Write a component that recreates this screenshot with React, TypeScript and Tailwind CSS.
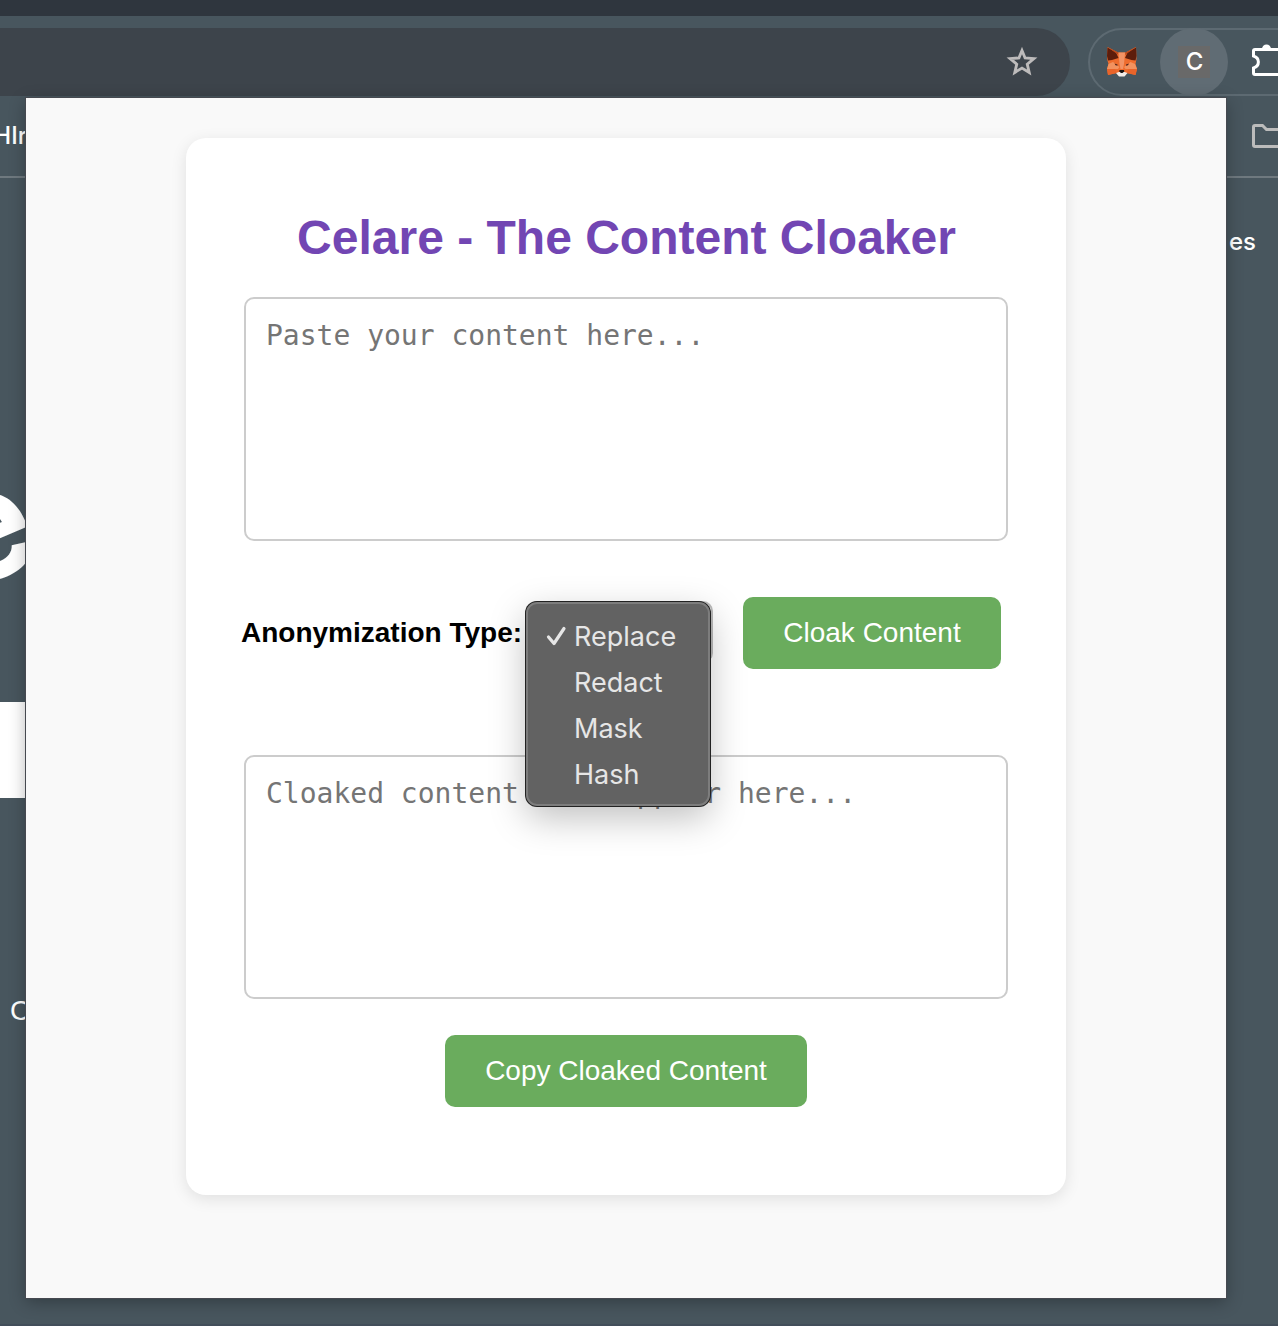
const options = ["Replace", "Redact", "Mask", "Hash"];

function Fox() {
  return (
    <svg width="32" height="30" viewBox="0 0 32 30" className="shrink-0">
      <path d="M1.500 0 12 5.500H19.500L30 0 30.500 12 29.500 17 31 22 29.500 28 21 26 18 29H13.500L10.500 26 2 28 1 22 2.500 17 1 12Z" fill="#ee6c2d" />
      <path d="M1.500 0.500 10 5.500 12.500 11 6 13 2 13.500 1 9Z M30 0.500 21.500 5.500 19 11 25.500 13 29.500 13.500 30.500 9Z" fill="#5d1d0b" />
      <path d="M1.500 0 12 5.500 12.500 8Z M30 0 19.500 5.500 19 8Z" fill="#b9481b" />
      <path d="M12.500 5.500H19L18 17 17 22H14.500L13.500 17Z" fill="#f29365" />
      <path d="M2.500 17 7 15 13.500 20 12 22 1 22Z M29 17 24.500 15 18 20 19.500 22 31 22Z" fill="#f2925f" />
      <path d="M1 22H9L11 26 2 28Z M31 22H22.500L20.500 26 29.500 28Z" fill="#e9642a" />
      <path d="M8.500 16.500 11.500 17.500 11.500 18.800 9.500 18.200Z M23 16.500 20 17.500 20 18.800 22 18.200Z" fill="#522318" />
      <path d="M10 26 13 25H18.500L21.500 26 18.500 29.500H13Z" fill="#f3ede9" />
      <path d="M13.500 23H18L18.300 24.500 16.500 26H15L13.200 24.500Z" fill="#1b1210" />
    </svg>
  );
}

function BrowserToolbar() {
  return (
    <div className="flex h-20 items-start bg-[#48565e] pt-3">
      <div className="flex h-[68px] w-[1070px] shrink-0 items-center justify-end rounded-r-full bg-[#3d444b] pr-[30px]">
        <svg width="36" height="36" viewBox="0 0 24 24" fill="none" stroke="#bdbbbb" strokeWidth="1.900">
          <path d="M12 4.300 14.050 9.300 19.900 9.800 15.500 13.450 16.800 18.950 12 16.050 7.200 18.950 8.500 13.450 4.100 9.800 9.950 9.300Z" />
        </svg>
      </div>
      <div className="ml-[18px] flex h-[68px] w-[240px] shrink-0 items-center rounded-l-full border-2 border-[#5d6a72] pl-4">
        <Fox />
        <div className="ml-[22px] flex size-[68px] shrink-0 items-center justify-center rounded-full bg-[#606c74]">
          <div className="flex size-8 items-center justify-center bg-[#696969] pl-px font-['Inter'] text-2xl font-medium text-white">C</div>
        </div>
        <svg width="36" height="36" viewBox="0 0 36 36" className="ml-[22px] shrink-0" fill="none">
          <path d="M5 5.500H33V30.500H5Q3.500 30.500 3.500 29V24C10 22 10 14 3.500 12V7Q3.500 5.500 5 5.500Z" stroke="white" strokeWidth="3" />
          <path d="M12 5a4.500 4.500 0 0 1 9 0Z" fill="white" />
        </svg>
      </div>
    </div>
  );
}

function BookmarksBar() {
  return (
    <div className="flex h-[82px] items-center justify-between border-b-2 border-[#6f797f]">
      <div className="flex w-[25px] justify-end overflow-hidden whitespace-nowrap font-['Inter'] text-2xl font-medium text-white">
        <span className="-mr-0.5">HIr</span>
      </div>
      <svg width="28" height="28" viewBox="0 0 28 28" fill="none">
        <path d="M5 3.500H12.500L16.500 7.500H34V24.500H5Q3.500 24.500 3.500 23V5Q3.500 3.500 5 3.500Z" stroke="#bcbcbc" strokeWidth="3" />
      </svg>
    </div>
  );
}

function PageBehind() {
  return (
    <div className="flex h-[1146px] justify-between overflow-hidden font-['Liberation_Sans'] text-white">
      <div className="flex w-[26px] flex-col overflow-hidden">
        <div className="mt-[266px] flex h-[160px] justify-end">
          <span className="-mr-[3px] font-['Inter'] text-[154px] leading-[160px] font-bold -rotate-[23deg]">e</span>
        </div>
        <div className="mt-[98px] h-24 shrink-0 bg-white" />
        <div className="mt-[197px] pl-[10px] text-[28px] leading-8">C</div>
      </div>
      <div className="w-[50px] pt-12 pl-px font-['Inter'] text-2xl font-medium">es</div>
    </div>
  );
}

function OptionsMenu() {
  return (
    <ul className="absolute top-px left-0 z-10 h-[204px] w-[184px] rounded-[11px] border-2 border-[#7d7d7d] bg-[#626262] pt-[10px] font-['Inter'] text-[27px] text-[#e6e6e6] shadow-[0_0_0_1px_#222,0_12px_36px_rgba(0,0,0,0.25)]">
      {options.map((option, index) => (
        <li key={option} className="flex h-[46px] items-center pl-[17px]">
          <span className="flex w-[29px] shrink-0">
            {index === 0 && (
              <svg width="22" height="22" viewBox="0 0 22 22" fill="none" stroke="#e6e6e6" strokeWidth="3.200" strokeLinecap="round" strokeLinejoin="round">
                <path d="M3.500 11 9 17.500 19 2.500" />
              </svg>
            )}
          </span>
          {option}
        </li>
      ))}
    </ul>
  );
}

const areaClass =
  "block h-[244px] w-[764px] resize-none rounded-[10px] border-2 border-[#ccc] bg-white px-5 py-5 font-['DejaVu_Sans_Mono'] text-[28px] leading-[33px] placeholder:text-[#757575] placeholder:opacity-100";
const buttonClass = "h-[72px] rounded-[10px] bg-[#6aac5d] text-[28px] text-white";

function Popup() {
  return (
    <main className="absolute top-[98px] left-[26px] flex h-[1200px] w-[1200px] justify-center bg-[#f9f9f9] pt-10 font-['Liberation_Sans'] shadow-[0_0_0_1px_#464950,0_4px_16px_rgba(0,0,0,0.3)]">
      <section className="flex h-[1057px] w-[880px] flex-col items-center rounded-[20px] bg-white pt-[72px] shadow-[0_4px_16px_rgba(0,0,0,0.1)]">
        <h1 className="pl-px text-[48px] leading-[56px] font-bold text-[#7246b3]">Celare - The Content Cloaker</h1>
        <textarea className={`mt-[31px] ${areaClass}`} placeholder="Paste your content here..." />
        <div className="mt-14 flex h-[72px] w-[770px] items-center">
          <label className="w-[285px] shrink-0 whitespace-nowrap text-[28px] font-bold">Anonymization Type:</label>
          <div className="relative mt-[-2px] h-[62px] w-[187px] shrink-0">
            <div className="h-full w-full rounded-[10px] border-2 border-[#bbb] bg-white" />
            <OptionsMenu />
          </div>
          <button className={`ml-[30px] w-[258px] ${buttonClass}`}>Cloak Content</button>
        </div>
        <textarea className={`mt-[86px] ${areaClass}`} placeholder="Cloaked content will appear here..." />
        <button className={`mt-9 w-[362px] ${buttonClass}`}>Copy Cloaked Content</button>
      </section>
    </main>
  );
}

export default function App() {
  return (
    <div className="relative h-[1326px] w-[1278px] overflow-hidden bg-[#48565e]">
      <div className="h-4 bg-[#2f363e]" />
      <BrowserToolbar />
      <BookmarksBar />
      <PageBehind />
      <div className="h-0.5 bg-[#424e5a]" />
      <Popup />
    </div>
  );
}
